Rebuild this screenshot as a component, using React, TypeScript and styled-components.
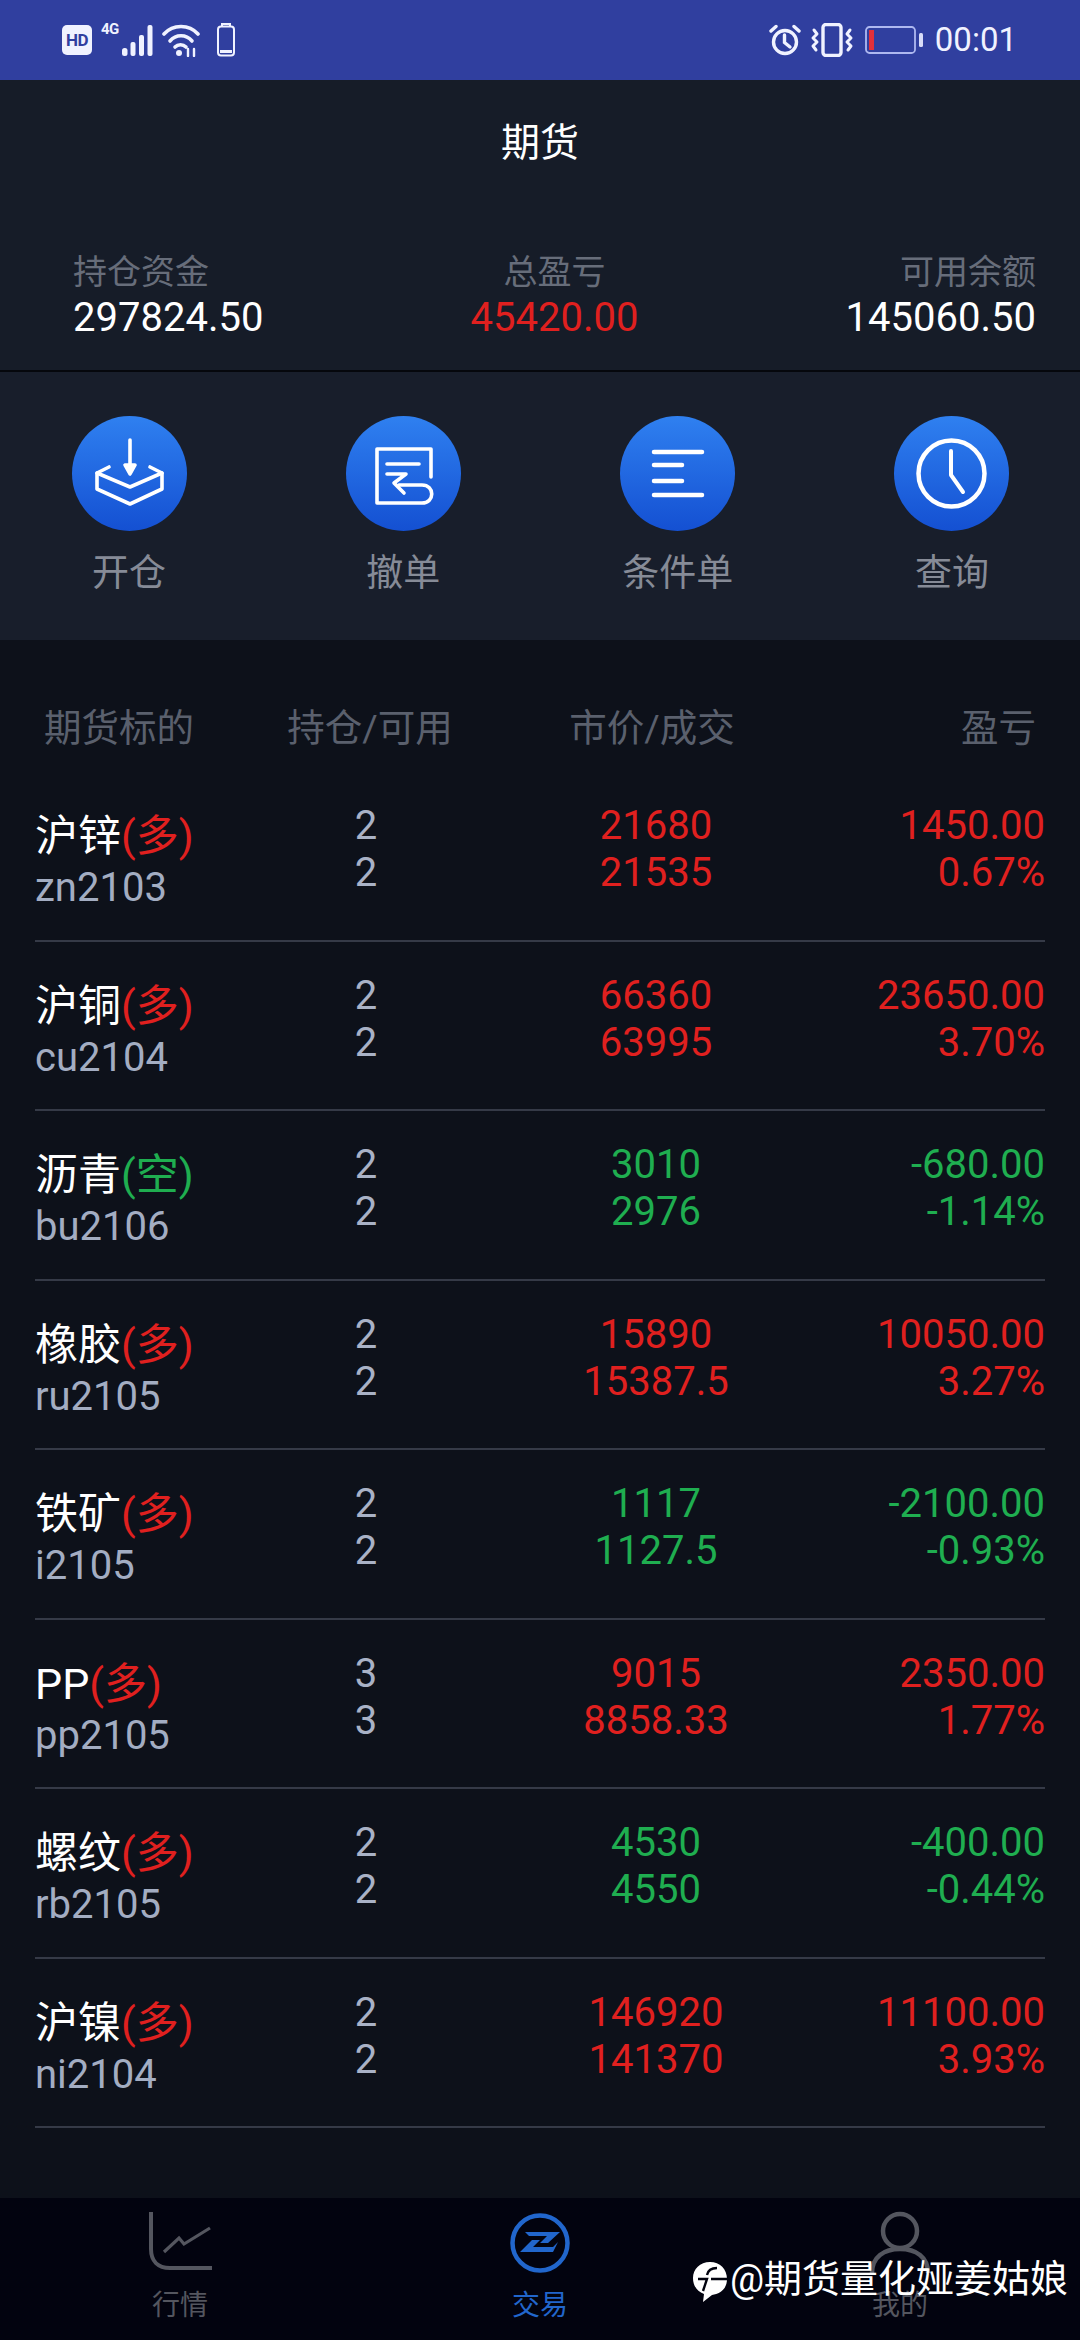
import styled, { createGlobalStyle } from 'styled-components';
import type { ReactNode } from 'react';

const RED = '#e0201f';
const GREEN = '#1fae50';

const GlobalStyle = createGlobalStyle`
  html, body {
    margin: 0;
    padding: 0;
    background: #0d111a;
  }
  * {
    box-sizing: border-box;
  }
`;

const Page = styled.div`
  position: relative;
  width: 1080px;
  height: 2340px;
  overflow: hidden;
  display: flex;
  flex-direction: column;
  background: #0d111a;
  font-family: Roboto, "Noto Sans CJK SC", sans-serif;
`;

const StatusBar = styled.div`
  height: 80px;
  padding: 0 63px 0 62px;
  display: flex;
  justify-content: space-between;
  align-items: center;
  background: #303f9f;
  color: #f0f2ff;
`;

const StatusGroup = styled.div`
  display: flex;
  align-items: center;
`;

const HdBadge = styled.span`
  width: 30px;
  height: 30px;
  margin-right: 9px;
  border-radius: 5px;
  background: #f0f2ff;
  color: #303f9f;
  font-size: 17px;
  font-weight: 700;
  line-height: 30px;
  text-align: center;
  letter-spacing: -0.5px;
`;

const NetLabel = styled.span`
  align-self: flex-start;
  margin-top: -2px;
  width: 21px;
  font-size: 15px;
  font-weight: 700;
  line-height: 16px;
  letter-spacing: -0.5px;
`;

const Clock = styled.span`
  margin-left: 10px;
  font-size: 33px;
  line-height: 40px;
`;

const TitleBar = styled.div`
  height: 126px;
  padding-top: 37px;
  text-align: center;
  color: #fff;
  font-size: 39px;
  line-height: 52px;
  background: #161c28;
`;

const Summary = styled.div`
  height: 166px;
  padding: 45px 44px 0 73px;
  display: flex;
  justify-content: space-between;
  background: #161c28;
  border-bottom: 2px solid #05070c;
`;

const SummaryItem = styled.div<{ $align: string }>`
  display: flex;
  flex-direction: column;
  text-align: ${({ $align }) => $align};
`;

const SummaryLabel = styled.div`
  color: #676d7a;
  font-size: 34px;
  line-height: 43px;
`;

const SummaryValue = styled.div<{ $color?: string }>`
  color: ${({ $color }) => $color || '#fff'};
  font-size: 40px;
  line-height: 48px;
`;

const Actions = styled.div`
  height: 268px;
  padding: 44px 53px 0 54px;
  display: flex;
  justify-content: space-between;
  background: #181e2b;
`;

const Action = styled.div`
  width: 150px;
  display: flex;
  flex-direction: column;
  align-items: center;
`;

const ActionCircle = styled.div`
  width: 115px;
  height: 115px;
  border-radius: 50%;
  display: flex;
  align-items: center;
  justify-content: center;
  background: linear-gradient(180deg, #2f80f0 0%, #1450d2 100%);
`;

const ActionLabel = styled.div`
  margin-top: 18px;
  color: #868b97;
  font-size: 37px;
  line-height: 50px;
  white-space: nowrap;
`;

const TableHead = styled.div`
  height: 132px;
  padding: 63px 44px 0 44px;
  display: grid;
  grid-template-columns: 206px 240px 324px 1fr;
  color: #5a606d;
  font-size: 37.5px;
  line-height: 50px;
`;

const HeadCell = styled.div<{ $align: string }>`
  text-align: ${({ $align }) => $align};
  white-space: nowrap;
`;

const Row = styled.div`
  height: 169.5px;
  margin: 0 35px;
  display: grid;
  grid-template-columns: 211px 240px 340px 1fr;
  border-bottom: 2px solid #353a47;
`;

const NameCell = styled.div`
  padding-top: 39px;
`;

const Name = styled.div`
  color: #fff;
  font-size: 43px;
  line-height: 51px;
  white-space: nowrap;
`;

const Side = styled.span<{ $color: string }>`
  color: ${({ $color }) => $color};
`;

const Code = styled.div`
  color: #a3adc2;
  font-size: 40px;
  line-height: 51px;
`;

const NumCell = styled.div<{ $align: string; $color: string }>`
  padding-top: 30px;
  color: ${({ $color }) => $color};
  font-size: 40px;
  line-height: 47px;
  text-align: ${({ $align }) => $align};
`;

const TabBar = styled.div`
  position: absolute;
  left: 0;
  right: 0;
  bottom: 0;
  height: 142px;
  display: grid;
  grid-template-columns: repeat(3, 1fr);
  background: #02030f;
`;

const Tab = styled.div<{ $active?: boolean }>`
  padding-top: 13px;
  display: flex;
  flex-direction: column;
  align-items: center;
  color: ${({ $active }) => ($active ? '#2166cc' : '#54565f')};
`;

const TabIcon = styled.div`
  width: 64px;
  height: 64px;
`;

const TabLabel = styled.div`
  margin-top: 12px;
  font-size: 28px;
  line-height: 38px;
`;

const Watermark = styled.div`
  position: absolute;
  left: 692px;
  top: 2255px;
  display: flex;
  align-items: center;
  color: #fff;
  font-size: 38px;
  line-height: 48px;
  white-space: nowrap;
`;

const WatermarkIcon = styled.svg`
  width: 36px;
  height: 42px;
  margin-right: 2px;
  margin-top: 6px;
`;

type Position = {
  name: string;
  side: string;
  code: string;
  hold: string;
  avail: string;
  price: string;
  deal: string;
  pnl: string;
  pct: string;
  up: boolean;
};

const positions: Position[] = [
  { name: '沪锌', side: '多', code: 'zn2103', hold: '2', avail: '2', price: '21680', deal: '21535', pnl: '1450.00', pct: '0.67%', up: true },
  { name: '沪铜', side: '多', code: 'cu2104', hold: '2', avail: '2', price: '66360', deal: '63995', pnl: '23650.00', pct: '3.70%', up: true },
  { name: '沥青', side: '空', code: 'bu2106', hold: '2', avail: '2', price: '3010', deal: '2976', pnl: '-680.00', pct: '-1.14%', up: false },
  { name: '橡胶', side: '多', code: 'ru2105', hold: '2', avail: '2', price: '15890', deal: '15387.5', pnl: '10050.00', pct: '3.27%', up: true },
  { name: '铁矿', side: '多', code: 'i2105', hold: '2', avail: '2', price: '1117', deal: '1127.5', pnl: '-2100.00', pct: '-0.93%', up: false },
  { name: 'PP', side: '多', code: 'pp2105', hold: '3', avail: '3', price: '9015', deal: '8858.33', pnl: '2350.00', pct: '1.77%', up: true },
  { name: '螺纹', side: '多', code: 'rb2105', hold: '2', avail: '2', price: '4530', deal: '4550', pnl: '-400.00', pct: '-0.44%', up: false },
  { name: '沪镍', side: '多', code: 'ni2104', hold: '2', avail: '2', price: '146920', deal: '141370', pnl: '11100.00', pct: '3.93%', up: true },
];

const Stroke = ({ size, children }: { size: number; children: ReactNode }) => (
  <svg width={size} height={size} viewBox={`0 0 ${size} ${size}`} fill="none" stroke="#fff" strokeWidth="3.6" strokeLinecap="round" strokeLinejoin="round">
    {children}
  </svg>
);

const actions: { label: string; icon: ReactNode }[] = [
  {
    label: '开仓',
    icon: (
      <Stroke size={115}>
        <path d="M58 24V50" />
        <path d="M53 49H63L58 58Z" fill="#fff" />
        <path d="M37 51L25 57V73L58 88L90 73V57L78 51" />
        <path d="M25 57L58 71L90 57" />
      </Stroke>
    ),
  },
  {
    label: '撤单',
    icon: (
      <Stroke size={115}>
        <path d="M85 61V33H31V87H76C89 87 89 69 76 69H53" />
        <path d="M41 48H73" />
        <path d="M41 58H60L48 67L58 77" />
      </Stroke>
    ),
  },
  {
    label: '条件单',
    icon: (
      <Stroke size={115}>
        <path d="M34 36H82" strokeWidth="4.5" />
        <path d="M34 49H62" strokeWidth="4.5" />
        <path d="M34 65H62" strokeWidth="4.5" />
        <path d="M34 79H82" strokeWidth="4.5" />
      </Stroke>
    ),
  },
  {
    label: '查询',
    icon: (
      <Stroke size={115}>
        <circle cx="57.5" cy="57.5" r="33" strokeWidth="4.5" />
        <path d="M57 35V59L69 76" strokeWidth="4" />
      </Stroke>
    ),
  },
];

const StatusLeftIcons = () => (
  <>
    <svg width="32" height="32" viewBox="0 0 32 32" fill="#f0f2ff" style={{ marginRight: 8 }}>
      <rect x="0" y="24" width="5.5" height="8" rx="2.5" />
      <rect x="8.5" y="18" width="5" height="14" rx="2" />
      <rect x="17" y="11" width="5" height="21" rx="2" />
      <rect x="25.5" y="1" width="5" height="31" rx="2" />
    </svg>
    <svg width="38" height="34" viewBox="0 0 38 34" fill="none" stroke="#f0f2ff" strokeWidth="3.6" strokeLinecap="round" style={{ marginRight: 16 }}>
      <path d="M2 11C11 1 27 1 36 11" />
      <path d="M8 18C14 11 24 11 30 18" />
      <path d="M13 24C16 21 21 21 24 24" />
      <circle cx="17" cy="30" r="3" fill="#f0f2ff" stroke="none" />
      <path d="M26 26V33M32 26V33" strokeWidth="2.4" />
    </svg>
    <svg width="20" height="34" viewBox="0 0 20 34" fill="none" stroke="#f0f2ff" strokeWidth="2">
      <path d="M6 3V1H14V3" />
      <rect x="2" y="3.5" width="16" height="29" rx="3" />
      <rect x="4" y="27" width="12" height="3" fill="#f0f2ff" stroke="none" />
    </svg>
  </>
);

const StatusRightIcons = () => (
  <>
    <svg width="32" height="32" viewBox="0 0 32 32" fill="none" stroke="#f0f2ff" strokeWidth="3.4" strokeLinecap="round" style={{ marginRight: 9 }}>
      <circle cx="16" cy="18" r="11.5" />
      <path d="M15.5 11V18.5L21 23" />
      <path d="M2 7L7 2.5M30 7L25 2.5" />
    </svg>
    <svg width="44" height="34" viewBox="0 0 44 34" fill="none" stroke="#f0f2ff" strokeWidth="3" strokeLinecap="round" strokeLinejoin="round" style={{ marginRight: 11 }}>
      <rect x="13" y="1.5" width="18" height="31" rx="3" strokeWidth="3.4" />
      <path d="M4 7L7 11L3 15L7 19L3 23L6 27" />
      <path d="M40 7L37 11L41 15L37 19L41 23L38 27" />
    </svg>
    <svg width="60" height="28" viewBox="0 0 60 28" fill="none">
      <rect x="1" y="1" width="49" height="26" rx="3.5" stroke="#aeb8f0" strokeWidth="1.8" />
      <rect x="4" y="4" width="5" height="20" fill="#e2303a" />
      <rect x="54" y="7" width="4" height="14" rx="1.5" fill="#d8dcf8" />
    </svg>
  </>
);

const MarketIcon = () => (
  <svg width="64" height="64" viewBox="0 0 64 64" fill="none" stroke="currentColor" strokeWidth="4">
    <path d="M3 1V38C3 50 10 57 22 57H64" />
    <path d="M16 41L31 27L36 33L62 17" strokeWidth="3.2" />
  </svg>
);

const TradeIcon = () => (
  <svg width="64" height="64" viewBox="0 0 64 64" fill="none" stroke="currentColor" strokeWidth="4.5">
    <circle cx="32" cy="32" r="27.5" />
    <path d="M17 21H52L40 32H32L39 25H21Z" fill="currentColor" stroke="none" />
    <path d="M24 29H32L25 36H45L50 31L45 41H12Z" fill="currentColor" stroke="none" />
  </svg>
);

const UserIcon = () => (
  <svg width="64" height="64" viewBox="0 0 64 64" fill="none" stroke="currentColor" strokeWidth="4.5">
    <circle cx="32" cy="20" r="17" />
    <path d="M4 62C4 46 16 38 32 38C48 38 60 46 60 62" />
  </svg>
);

export default function App() {
  return (
    <Page>
      <GlobalStyle />
      <StatusBar>
        <StatusGroup>
          <HdBadge>HD</HdBadge>
          <NetLabel>4G</NetLabel>
          <StatusLeftIcons />
        </StatusGroup>
        <StatusGroup>
          <StatusRightIcons />
          <Clock>00:01</Clock>
        </StatusGroup>
      </StatusBar>

      <TitleBar>期货</TitleBar>

      <Summary>
        <SummaryItem $align="left">
          <SummaryLabel>持仓资金</SummaryLabel>
          <SummaryValue>297824.50</SummaryValue>
        </SummaryItem>
        <SummaryItem $align="center">
          <SummaryLabel>总盈亏</SummaryLabel>
          <SummaryValue $color={RED}>45420.00</SummaryValue>
        </SummaryItem>
        <SummaryItem $align="right">
          <SummaryLabel>可用余额</SummaryLabel>
          <SummaryValue>145060.50</SummaryValue>
        </SummaryItem>
      </Summary>

      <Actions>
        {actions.map((action) => (
          <Action key={action.label}>
            <ActionCircle>{action.icon}</ActionCircle>
            <ActionLabel>{action.label}</ActionLabel>
          </Action>
        ))}
      </Actions>

      <TableHead>
        <HeadCell $align="left">期货标的</HeadCell>
        <HeadCell $align="center">持仓/可用</HeadCell>
        <HeadCell $align="center">市价/成交</HeadCell>
        <HeadCell $align="right">盈亏</HeadCell>
      </TableHead>

      {positions.map((p) => {
        const color = p.up ? RED : GREEN;
        return (
          <Row key={p.code}>
            <NameCell>
              <Name>
                {p.name}
                <Side $color={p.side === '多' ? RED : GREEN}>({p.side})</Side>
              </Name>
              <Code>{p.code}</Code>
            </NameCell>
            <NumCell $align="center" $color="#a9b2c6">
              {p.hold}
              <br />
              {p.avail}
            </NumCell>
            <NumCell $align="center" $color={color}>
              {p.price}
              <br />
              {p.deal}
            </NumCell>
            <NumCell $align="right" $color={color}>
              {p.pnl}
              <br />
              {p.pct}
            </NumCell>
          </Row>
        );
      })}

      <TabBar>
        <Tab>
          <TabIcon>
            <MarketIcon />
          </TabIcon>
          <TabLabel>行情</TabLabel>
        </Tab>
        <Tab $active>
          <TabIcon>
            <TradeIcon />
          </TabIcon>
          <TabLabel>交易</TabLabel>
        </Tab>
        <Tab>
          <TabIcon>
            <UserIcon />
          </TabIcon>
          <TabLabel>我的</TabLabel>
        </Tab>
      </TabBar>

      <Watermark>
        <WatermarkIcon viewBox="0 0 36 42">
          <path d="M18 1C28 1 35 8 35 18C35 28 28 33 20 34L11 41L12 33C5 30 1 25 1 17C1 8 8 1 18 1Z" fill="#fff" />
          <path d="M6 18H15L11 30M15 14C16 9 19 7 25 7M19 18H35" fill="none" stroke="#02030f" strokeWidth="2.4" />
        </WatermarkIcon>
        @期货量化娅姜姑娘
      </Watermark>
    </Page>
  );
}
